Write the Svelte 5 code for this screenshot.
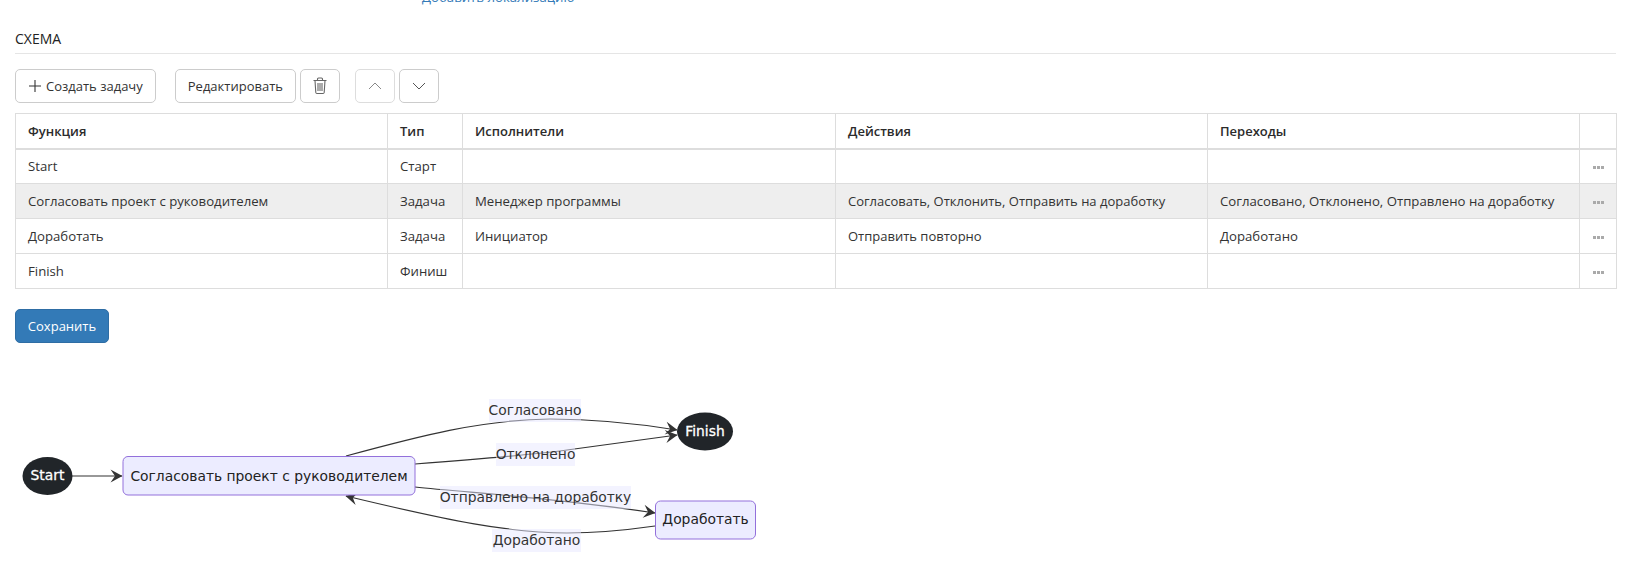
<script lang="ts">
  const columns = ["Функция", "Тип", "Исполнители", "Действия", "Переходы", ""];

  const rows = [
    { name: "Start", type: "Старт", performers: "", actions: "", transitions: "" },
    {
      name: "Согласовать проект с руководителем",
      type: "Задача",
      performers: "Менеджер программы",
      actions: "Согласовать, Отклонить, Отправить на доработку",
      transitions: "Согласовано, Отклонено, Отправлено на доработку",
      selected: true
    },
    { name: "Доработать", type: "Задача", performers: "Инициатор", actions: "Отправить повторно", transitions: "Доработано" },
    { name: "Finish", type: "Финиш", performers: "", actions: "", transitions: "" }
  ];

  const edges = [
    "M72,477 L122,477",
    "M346,457 C420,437 480,421 550,420 C600,420 640,425 677,431",
    "M415,465 C480,460 530,456 567,451 L677,436",
    "M415,488 C470,494 550,498 655,514",
    "M655,527 C620,532 590,534 567,534 C510,534 450,522 346,497"
  ];

  const labels = [
    { text: "Согласовано", x: 489, y: 400, w: 92, h: 23 },
    { text: "Отклонено", x: 496, y: 444, w: 79, h: 23 },
    { text: "Отправлено на доработку", x: 440, y: 487, w: 191, h: 23 },
    { text: "Доработано", x: 492, y: 530, w: 89, h: 23 }
  ];
</script>

<div class="page">
  <a class="link" href="#loc">Добавить локализацию</a>

  <h2 class="title">СХЕМА</h2>

  <div class="toolbar">
    <button class="btn">
      <svg width="14" height="14" viewBox="0 0 14 14"><path d="M7 1v12M1 7h12" stroke="#333" stroke-width="1.1" fill="none" /></svg>
      Создать задачу
    </button>
    <div class="group">
      <button class="btn">Редактировать</button>
      <button class="btn icon" aria-label="Удалить">
        <svg width="16" height="18" viewBox="0 0 16 18" fill="none" stroke="#666" stroke-width="1.1">
          <path d="M1.5 3.5h13M5.5 3.5V2a1 1 0 0 1 1-1h3a1 1 0 0 1 1 1v1.5M3 3.5l.8 12a1.2 1.2 0 0 0 1.2 1h6a1.2 1.2 0 0 0 1.2-1l.8-12M6 6v8M8 6v8M10 6v8" />
        </svg>
      </button>
    </div>
    <div class="group arrows">
      <button class="btn icon faded" aria-label="Вверх">
        <svg width="14" height="8" viewBox="0 0 14 8"><path d="M1 7l6-6 6 6" stroke="#888" fill="none" /></svg>
      </button>
      <button class="btn icon" aria-label="Вниз">
        <svg width="14" height="8" viewBox="0 0 14 8"><path d="M1 1l6 6 6-6" stroke="#555" fill="none" /></svg>
      </button>
    </div>
  </div>

  <table>
    <colgroup>
      <col style="width:372px" /><col style="width:75px" /><col style="width:373px" />
      <col style="width:372px" /><col style="width:372px" /><col style="width:37px" />
    </colgroup>
    <thead>
      <tr>
        {#each columns as c}<th>{c}</th>{/each}
      </tr>
    </thead>
    <tbody>
      {#each rows as r}
        <tr class:selected={r.selected}>
          <td>{r.name}</td>
          <td>{r.type}</td>
          <td>{r.performers}</td>
          <td class="actions">{r.actions}</td>
          <td>{r.transitions}</td>
          <td class="more"><span></span><span></span><span></span></td>
        </tr>
      {/each}
    </tbody>
  </table>

  <button class="btn primary">Сохранить</button>

  <!-- page coordinates in the viewBox, the diagram is a free canvas -->
  <svg class="diagram" width="780" height="219" viewBox="0 360 780 219">
    <defs>
      <marker id="arrow" viewBox="0 0 14 14" refX="12.5" refY="7" markerWidth="14" markerHeight="14" markerUnits="userSpaceOnUse" orient="auto">
        <path d="M1 0.5 L13 7 L1 13.5 L5.5 7 Z" fill="#333" />
      </marker>
    </defs>

    {#each edges as d}
      <path {d} class="edge" marker-end="url(#arrow)" />
    {/each}

    <ellipse cx="47.5" cy="477" rx="25" ry="19" class="dark" />
    <text x="47.5" y="481" class="light">Start</text>

    <rect x="123" y="457.5" width="292" height="38.5" rx="5" class="node" />
    <text x="269" y="481.5" class="dim">Согласовать проект с руководителем</text>

    <ellipse cx="705" cy="432.5" rx="28" ry="19" class="dark" />
    <text x="705" y="437" class="light">Finish</text>

    <rect x="655.5" y="502" width="100" height="38" rx="5" class="node" />
    <text x="705.5" y="525" class="dim">Доработать</text>

    {#each labels as l}
      <rect x={l.x} y={l.y} width={l.w} height={l.h} class="label-bg" />
      <text x={l.x + l.w / 2} y={l.y + 16} class="label">{l.text}</text>
    {/each}
  </svg>
</div>

<style>
  :global(body) {
    margin: 0;
    background: #fff;
    overflow: hidden;
  }

  .page {
    height: 579px;
    padding: 0 16px 0 15px;
    box-sizing: border-box;
    overflow: hidden;
    font-family: "Open Sans", "Noto Sans", sans-serif;
    font-size: 13px;
    color: #333;
  }

  .link {
    display: block;
    margin: -12px 0 0 407px;
    font-size: 13.2px;
    line-height: 18px;
    color: #337ab7;
    text-decoration: none;
  }

  .title {
    margin: 24px 0 0;
    padding-bottom: 5px;
    border-bottom: 1px solid #e5e5e5;
    font-size: 14px;
    line-height: 18px;
    font-weight: 400;
    color: #222;
  }

  .toolbar {
    display: flex;
    gap: 19px;
    margin-top: 15px;
  }

  .group {
    display: flex;
    gap: 4px;
  }

  .arrows {
    margin-left: -4px;
  }

  .btn {
    display: inline-flex;
    align-items: center;
    justify-content: center;
    gap: 4px;
    height: 34px;
    padding: 0 12px;
    border: 1px solid #ccc;
    border-radius: 5px;
    background: #fff;
    font: inherit;
    color: #333;
  }

  .icon {
    width: 40px;
    padding: 0;
  }

  .faded {
    border-color: #ddd;
  }

  table {
    width: 1601px;
    margin-top: 10px;
    border-collapse: collapse;
    table-layout: fixed;
  }

  th, td {
    height: 35px;
    padding: 0 12px;
    box-sizing: border-box;
    border: 1px solid #ddd;
    text-align: left;
    white-space: nowrap;
  }

  td {
    font-size: 13.2px;
  }

  td.actions {
    font-size: 13px;
  }

  th {
    height: 35px;
    border-bottom-width: 2px;
    font-weight: 600;
    color: #2b2b2b;
  }

  .selected td {
    background: #eee;
  }

  .more {
    padding: 0;
    text-align: center;
  }

  .more span {
    display: inline-block;
    width: 3px;
    height: 3px;
    margin: 0 0.5px;
    background: #aaa;
    vertical-align: middle;
  }

  .primary {
    margin-top: 20px;
    width: 94px;
    padding: 0;
    border-color: #2e6da4;
    background: #337ab7;
    color: #fff;
  }

  .diagram {
    display: block;
    margin: 16px 0 0 -15px;
    font-family: "DejaVu Sans", Verdana, sans-serif;
    font-size: 13.85px;
  }

  .diagram text {
    text-anchor: middle;
  }

  .edge {
    fill: none;
    stroke: #333;
    stroke-width: 1.2;
  }

  .dark {
    fill: #212529;
  }

  .node {
    fill: #ececff;
    stroke: #9370db;
    stroke-width: 1;
  }

  .light {
    fill: #fff;
    stroke: #fff;
    stroke-width: 0.3;
  }

  .dim {
    fill: #222;
  }

  .label-bg {
    fill: #e8e8ff;
    fill-opacity: 0.5;
  }

  .label {
    fill: #333;
  }
</style>
